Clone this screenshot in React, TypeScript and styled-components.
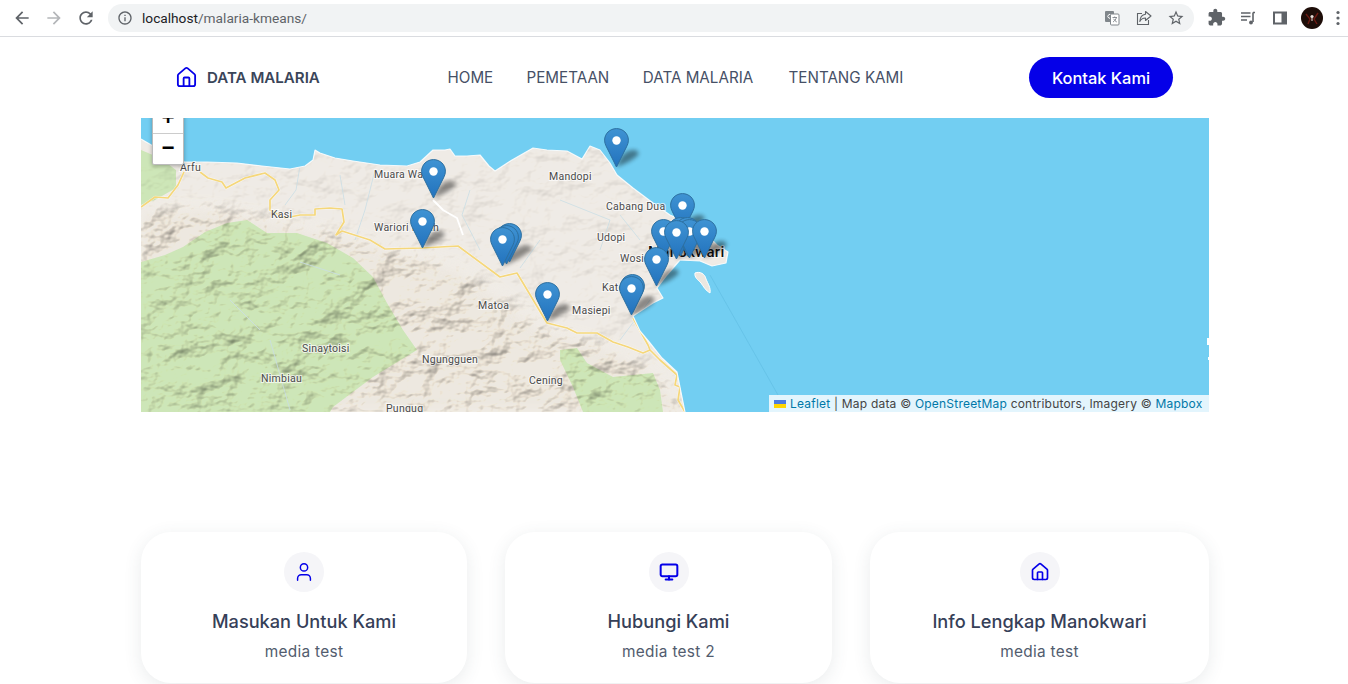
import React from "react";
import styled, { createGlobalStyle } from "styled-components";
import { House, Monitor, User } from "lucide-react";

const Global = createGlobalStyle`
  html, body { margin: 0; padding: 0; background: #fff; height: 684px; overflow: hidden; }
  * { box-sizing: border-box; }
`;
const FONT = `"Inter", "Liberation Sans", sans-serif`;
const BLUE = "#0500e8";

const Page = styled.div`width: 1348px; height: 684px; overflow: hidden; font-family: ${FONT};`;

const Toolbar = styled.div`
  height: 37px; display: flex; align-items: center; padding: 0 0 1px 6px;
  border-bottom: 1px solid #dadce0; background: #fff;
`;
const ToolBtn = styled.div<{ $w?: number; $c?: string }>`
  width: ${(p) => p.$w ?? 32}px; height: 32px; flex: none; color: ${(p) => p.$c ?? "#5f6368"};
  display: flex; align-items: center; justify-content: center;
`;
const Omnibox = styled.div`
  flex: none; width: 1086px; height: 28px; margin: 0 6px; border-radius: 14px; background: #f1f3f4;
  display: flex; align-items: center; padding: 0 2px 0 9px;
  font: 400 13.7px "Roboto", sans-serif; color: #5f6368;
`;
const UrlHost = styled.span`color: #202124;`;
const Url = styled.div`flex: 1; margin-left: 9px; white-space: nowrap;`;

const Nav = styled.nav`
  width: 1068px; height: 81px; margin-left: 141px; padding: 0 36px;
  display: flex; align-items: center; justify-content: space-between;
`;
const Brand = styled.div`
  width: 143px; display: flex; align-items: center; gap: 9px;
  font-size: 15.1px; font-weight: 600; color: #3a4559; white-space: nowrap;
  & > svg { margin-left: -2px; flex: none; }
`;
const Links = styled.div`display: flex; gap: 34px; color: #465066; font-size: 15.2px; white-space: nowrap;`;
const NavLink = styled.a<{ $w: number }>`width: ${(p) => p.$w}px; text-align: center;`;
const Cta = styled.button`
  width: 144px; height: 41px; border: 0; border-radius: 21px; background: ${BLUE}; color: #fff;
  font: 500 16.4px ${FONT};
`;

const MapBox = styled.section`
  position: relative; width: 1068px; height: 294px; margin-left: 141px; overflow: hidden; background: #72cef2;
`;
const MapArt = styled.svg`display: block; width: 1068px; height: 294px;`;
const Hill = styled.g<{ $o: number }>`mix-blend-mode: multiply; opacity: ${(p) => p.$o};`;
const Label = styled.text<{ $big?: boolean }>`
  font-family: "Roboto", sans-serif; font-size: ${(p) => (p.$big ? 15 : 10.5)}px;
  font-weight: ${(p) => (p.$big ? 500 : 400)}; letter-spacing: .25px;
  fill: ${(p) => (p.$big ? "#111" : "#4a4a4a")};
  stroke: rgba(255,255,255,.7); stroke-width: 2px; paint-order: stroke;
`;
const Pin = styled.svg<{ $x: number; $y: number }>`
  position: absolute; left: ${(p) => p.$x - 141 - 12.5}px; top: ${(p) => p.$y - 118 - 39}px;
  width: 25px; height: 41px;
`;
const Zoom = styled.div`
  position: absolute; left: 11px; top: -16px; width: 32px; background: #fff;
  border: 1px solid #bbb; border-radius: 2px; box-shadow: 0 1px 4px rgba(0,0,0,.3);
`;
const ZoomBtn = styled.div`
  height: 30px; padding-top: 3px; display: flex; align-items: center; justify-content: center;
  font: 700 22px "Liberation Mono", monospace; color: #000;
  & + & { border-top: 1px solid #ccc; height: 31px; padding-top: 0; }
`;
const Attribution = styled.div`
  position: absolute; right: 0; bottom: 0; width: 440px; height: 17px; padding-left: 5px;
  display: flex; align-items: center; gap: 4px; white-space: pre;
  background: rgba(255,255,255,.8); font-size: 12px; letter-spacing: .21px; color: #444;
`;
const A = styled.span`color: #0078a8;`;

const Cards = styled.section`
  width: 1068px; margin: 120px 0 0 141px;
  display: grid; grid-template-columns: 326px 327px 339px; column-gap: 38px;
`;
const Card = styled.article`
  height: 151px; padding-top: 20px; border-radius: 30px; background: #fff;
  box-shadow: 0 4px 18px rgba(60,80,90,.11);
  display: flex; flex-direction: column; align-items: center;
`;
const IconDot = styled.div`
  width: 40px; height: 40px; border-radius: 50%; background: #f5f5f8; color: ${BLUE};
  display: flex; align-items: center; justify-content: center;
`;
const CardTitle = styled.h3`margin: 15px 0 0; font-size: 18.2px; line-height: 28px; font-weight: 500; color: #364058;`;
const CardText = styled.p`margin: 7px 0 0; font-size: 15.4px; line-height: 20px; letter-spacing: .3px; font-weight: 400; color: #525c6e;`;

const pins: [number, number][] = [
  [433, 198], [422, 248], [509, 262], [506, 264], [502, 266], [616, 167], [547, 321], [632, 313], [631, 315],
  [682, 232], [680, 256], [687, 256], [663, 258], [689, 258], [704, 258], [676, 259], [656, 286],
];

const labels: [string, number, number][] = [
  ["Arfu", 180, 171], ["Muara Wasi", 374, 178], ["Kasi", 271, 218], ["Wariori Indah", 374, 231],
  ["Mandopi", 549, 180], ["Cabang Dua", 606, 210], ["Udopi", 597, 241], ["Wosi", 620, 262], ["Katoi", 602, 291],
  ["Matoa", 478, 309], ["Masiepi", 572, 314], ["Sinaytoisi", 302, 352], ["Nimbiau", 261, 382],
  ["Ngungguen", 422, 363], ["Cening", 529, 384], ["Pungug", 386, 412],
];

const LAND = "M141 139 L153 146 L170 159 L185 162 L207 162 L237 163 L262 166 L290 169 L305 166 L313 160 L315 150 L320 153 L335 158 L353 161 L380 165 L407 166 L420 162 L433 150 L445 150 L450 149 L455 156 L467 156 L480 155 L489 166 L495 171 L512 160 L533 148 L547 150 L567 151 L582 159 L590 146 L600 150 L610 163 L617 175 L633 188 L653 203 L670 215 L700 228 L717 245 L728 252 L726 263 L712 266 L700 261 L680 260 L667 275 L657 288 L663 298 L653 303 L633 316 L640 331 L650 343 L662 358 L677 372 L680 387 L685 412 L141 412 Z";
const MOUNT = "M141 212 L200 207 L260 218 L340 236 L400 252 L455 268 L490 290 L540 328 L600 345 L650 368 L685 412 L141 412 Z";
const GREEN = "M141 262 L165 255 L183 247 L205 232 L227 223 L247 220 L267 233 L297 233 L327 243 L353 258 L373 277 L387 303 L403 330 L417 350 L373 377 L333 407 L330 412 L141 412 Z";
const GREEN_W = "M141 150 L160 158 L176 170 L176 188 L155 200 L141 205 Z";
const GREEN_S = "M560 350 L577 348 L587 363 L613 377 L653 373 L660 390 L663 412 L583 412 L573 387 L560 360 Z";
const ROAD1 = "M141 207 L155 197 L168 198 L178 185 L184 172 M200 172 L208 178 L222 182 L226 188 L245 178 L265 173 L275 180 L279 190 L270 200 L270 210 L285 218 L300 215 L315 215 L315 209 L330 208 L342 209 L344 222 L336 235 L342 231 L370 240 L385 249 L422 248 L458 246 L500 277 L517 273 L547 323 L567 328 L577 333 L597 333 L613 342 L628 347 L643 353 L650 350 L660 360 L677 375 L675 385 L680 387 L678 400 L685 412 M633 318 L648 345 L650 350";
const RIVERS = "M300 166 L296 190 L285 205 M340 175 L345 205 M375 170 L365 210 L355 240 M470 190 L462 215 L480 250 M560 200 L610 220 L600 250 M620 215 L640 240 M300 262 L340 275 M230 300 L260 330 M270 340 L290 410 M540 240 L520 268 M650 300 L620 340";

const Pt: React.FC<{ d: string; w?: number }> = ({ d, w = 20 }) => (
  <svg width={w} height={w} viewBox="0 0 24 24" fill="currentColor"><path d={d} /></svg>
);

export default function App() {
  return (
    <Page>
      <Global />
      <Toolbar>
        <ToolBtn><Pt d="M20 11H7.83l5.59-5.59L12 4l-8 8 8 8 1.41-1.41L7.83 13H20v-2z" /></ToolBtn>
        <ToolBtn $c="#b4b6b9"><Pt d="M12 4l-1.41 1.41L16.17 11H4v2h12.17l-5.58 5.59L12 20l8-8z" /></ToolBtn>
        <ToolBtn><Pt d="M17.65 6.35C16.2 4.9 14.21 4 12 4c-4.42 0-7.99 3.58-7.99 8s3.57 8 7.99 8c3.73 0 6.84-2.55 7.73-6h-2.08c-.82 2.33-3.04 4-5.65 4-3.31 0-6-2.69-6-6s2.69-6 6-6c1.66 0 3.14.69 4.22 1.78L13 11h7V4l-2.35 2.35z" /></ToolBtn>
        <Omnibox>
          <Pt w={16} d="M11 7h2v2h-2zm0 4h2v6h-2zm1-9C6.48 2 2 6.48 2 12s4.48 10 10 10 10-4.48 10-10S17.52 2 12 2zm0 18c-4.41 0-8-3.59-8-8s3.59-8 8-8 8 3.59 8 8-3.59 8-8 8z" />
          <Url><UrlHost>localhost</UrlHost>/malaria-kmeans/</Url>
          <ToolBtn>
            <svg width="16" height="16" viewBox="0 0 16 16">
              <rect x="1" y="1" width="9" height="11" rx="1" fill="#80868b" />
              <path d="M7.5 5.2a2 2 0 1 0 .2 2H5.8" fill="none" stroke="#fff" strokeWidth="1" />
              <rect x="6.5" y="4" width="8.5" height="11" rx="1" fill="#fff" stroke="#80868b" />
              <path d="M8.5 7.5h4.5M10.7 6.5v1M12.4 7.5c-.5 2-1.8 3.5-3.4 4.5M9.6 8.8c.7 1.4 1.8 2.5 3.2 3.2" fill="none" stroke="#80868b" strokeWidth=".9" />
            </svg>
          </ToolBtn>
          <ToolBtn>
            <svg width="16" height="16" viewBox="0 0 16 16" fill="none" stroke="#5f6368" strokeWidth="1.1">
              <path d="M6 3.5H1.5v11h11V10" />
              <path d="M9.5 1.500L15 6l-5.500 4.500V8C7 8 5 9 3.800 11.500 4 8 6 4.600 9.500 4.200z" strokeLinejoin="round" />
            </svg>
          </ToolBtn>
          <ToolBtn><Pt w={18} d="M22 9.24l-7.19-.62L12 2 9.19 8.63 2 9.24l5.46 4.73L5.82 21 12 17.27 18.18 21l-1.63-7.03L22 9.24zM12 15.4l-3.76 2.27 1-4.28-3.32-2.88 4.38-.38L12 6.1l1.71 4.04 4.38.38-3.32 2.88 1 4.28L12 15.4z" /></ToolBtn>
        </Omnibox>
        <ToolBtn><Pt w={19} d="M20.5 11H19V7c0-1.1-.9-2-2-2h-4V3.5C13 2.12 11.88 1 10.5 1S8 2.12 8 3.5V5H4c-1.1 0-1.99.9-1.99 2v3.8H3.5c1.49 0 2.7 1.21 2.7 2.7s-1.21 2.7-2.7 2.7H2V20c0 1.1.9 2 2 2h3.8v-1.5c0-1.49 1.21-2.7 2.7-2.7 1.49 0 2.7 1.21 2.7 2.7V22H17c1.1 0 2-.9 2-2v-4h1.5c1.38 0 2.5-1.12 2.5-2.5S21.88 11 20.5 11z" /></ToolBtn>
        <ToolBtn>
          <svg width="16" height="16" viewBox="0 0 16 16" fill="none" stroke="#5f6368" strokeWidth="1.4">
            <path d="M1 3h9.5M1 6.5h9.5M1 10h6" />
            <path d="M13 2.5v9.5" strokeWidth="1.6" /><path d="M13 2.5h2" />
            <circle cx="11" cy="12.5" r="1.9" fill="#5f6368" stroke="none" />
          </svg>
        </ToolBtn>
        <ToolBtn>
          <svg width="16" height="16" viewBox="0 0 16 16">
            <path d="M1 1.500h14v13H1z" fill="#5f6368" /><path d="M3 3.500h6.500v9H3z" fill="#fff" />
          </svg>
        </ToolBtn>
        <ToolBtn>
          <svg width="22" height="22" viewBox="0 0 22 22">
            <circle cx="11" cy="11" r="11" fill="#1d0d08" />
            <path d="M5 7l4 5-2 5M17 6l-4 6 3 5" stroke="#6e1a12" strokeWidth="1.4" fill="none" />
            <circle cx="11" cy="9.5" r="1.6" fill="#e8dcd6" /><path d="M11 11v3" stroke="#c9b8b0" strokeWidth="1.2" />
          </svg>
        </ToolBtn>
        <ToolBtn $w={20}>
          <svg width="4" height="16" viewBox="0 0 4 16" fill="#5f6368">
            <circle cx="2" cy="2.5" r="1.6" /><circle cx="2" cy="8" r="1.6" /><circle cx="2" cy="13.5" r="1.6" />
          </svg>
        </ToolBtn>
      </Toolbar>

      <Nav>
        <Brand>
          <House size={23} strokeWidth={1.9} color={BLUE} />
          DATA MALARIA
        </Brand>
        <Links>
          <NavLink $w={45}>HOME</NavLink>
          <NavLink $w={81}>PEMETAAN</NavLink>
          <NavLink $w={113}>DATA MALARIA</NavLink>
          <NavLink $w={113}>TENTANG KAMI</NavLink>
        </Links>
        <Cta>Kontak Kami</Cta>
      </Nav>

      <MapBox>
        <MapArt viewBox="141 118 1068 294">
          <defs>
            <linearGradient id="pinFill" x1="0" y1="0" x2="0" y2="1">
              <stop offset="0" stopColor="#3f93d3" /><stop offset="1" stopColor="#2272bd" />
            </linearGradient>
            <filter id="hillshade" x="0" y="0" width="100%" height="100%" colorInterpolationFilters="sRGB">
              <feTurbulence type="fractalNoise" baseFrequency="0.03 0.038" numOctaves="4" seed="11" result="n" />
              <feDiffuseLighting in="n" surfaceScale="5" diffuseConstant="1.2" lightingColor="#fffaf2">
                <feDistantLight azimuth="235" elevation="60" />
              </feDiffuseLighting>
              <feGaussianBlur stdDeviation=".6" />
            </filter>
            <filter id="soft"><feGaussianBlur stdDeviation="2.2" /></filter>
            <filter id="softEdge"><feGaussianBlur stdDeviation="6" /></filter>
            <clipPath id="landClip"><path d={LAND} /></clipPath>
            <mask id="mountMask"><path d={MOUNT} fill="#fff" filter="url(#softEdge)" /></mask>
          </defs>
          <rect x="141" y="118" width="1068" height="294" fill="#72cef2" />
          <path d={LAND} fill="#ece7e0" />
          <path d="M695 273 C700 271 705 274 706 279 C708 284 711 288 710 293 C706 291 703 286 701 283 C698 280 694 277 695 273 Z" fill="#ece7e0" stroke="#fff" />
          <path d="M1207 338h2v7h-2zM1208 357h1v3h-1z" fill="#fff" />
          <path d="M710 275 L778 395" stroke="#62bfe4" strokeWidth=".7" fill="none" />
          <g clipPath="url(#landClip)">
            <path d={MOUNT} fill="#e2dace" opacity=".55" filter="url(#softEdge)" />
            <path d={GREEN} fill="#cde6b8" />
            <path d={GREEN_W} fill="#cde6b8" />
            <path d={GREEN_S} fill="#cde6b8" />
            <Hill $o={0.2}><rect x="141" y="118" width="600" height="294" filter="url(#hillshade)" /></Hill>
            <Hill $o={0.6} mask="url(#mountMask)"><rect x="141" y="118" width="600" height="294" filter="url(#hillshade)" /></Hill>
            <path d={RIVERS} fill="none" stroke="#c9dde4" strokeWidth=".8" />
            <path d={ROAD1} fill="none" stroke="#fff" strokeWidth="2.6" strokeLinejoin="round" opacity=".6" />
            <path d={ROAD1} fill="none" stroke="#f5d77a" strokeWidth="1.7" strokeLinejoin="round" />
            <path d="M433 200 L443 210 L457 218 L463 235" fill="none" stroke="#fff" strokeWidth="1.8" />
          </g>
          <path d={LAND.replace("L141 412 Z", "")} fill="none" stroke="#fff" strokeWidth="1.2" strokeLinejoin="round" opacity=".85" />
          {labels.map(([t, x, y]) => <Label key={t} x={x} y={y}>{t}</Label>)}
          <Label $big x={648} y={257}>Manokwari</Label>
          <g filter="url(#soft)" opacity=".42">
            {pins.map(([x, y], i) => (
              <path key={i} d={`M${x} ${y} l5 -10 q6 -8 14 -7 q6 2 2 6 q-8 7 -21 11z`} fill="#000" />
            ))}
          </g>
        </MapArt>
        {pins.map(([x, y], i) => (
          <Pin key={i} $x={x} $y={y} viewBox="0 0 25 41">
            <path d="M12.5 .6C5.9 .6 .6 5.7 .6 12.2c0 2.2 .8 4.600 1.900 6.700L12.500 39l10-20.100c1.100-2.100 1.900-4.500 1.900-6.700C24.400 5.700 19.100 .6 12.500 .6z" fill="url(#pinFill)" stroke="#2d6f9f" strokeWidth="1" />
            <circle cx="12.500" cy="12.500" r="4.200" fill="#fff" />
          </Pin>
        ))}
        <Zoom>
          <ZoomBtn>+</ZoomBtn>
          <ZoomBtn>−</ZoomBtn>
        </Zoom>
        <Attribution>
          <svg width="12" height="8" viewBox="0 0 12 8"><path d="M0 0h12v4H0z" fill="#4C7BE1" /><path d="M0 4h12v4H0z" fill="#FFD500" /></svg>
          <span><A>Leaflet</A> | Map data © <A>OpenStreetMap</A> contributors, Imagery © <A>Mapbox</A></span>
        </Attribution>
      </MapBox>

      <Cards>
        <Card>
          <IconDot><User size={22} strokeWidth={1.6} /></IconDot>
          <CardTitle>Masukan Untuk Kami</CardTitle>
          <CardText>media test</CardText>
        </Card>
        <Card>
          <IconDot><Monitor size={20} strokeWidth={2.4} /></IconDot>
          <CardTitle>Hubungi Kami</CardTitle>
          <CardText>media test 2</CardText>
        </Card>
        <Card>
          <IconDot><House size={20} strokeWidth={2} /></IconDot>
          <CardTitle>Info Lengkap Manokwari</CardTitle>
          <CardText>media test</CardText>
        </Card>
      </Cards>
    </Page>
  );
}
